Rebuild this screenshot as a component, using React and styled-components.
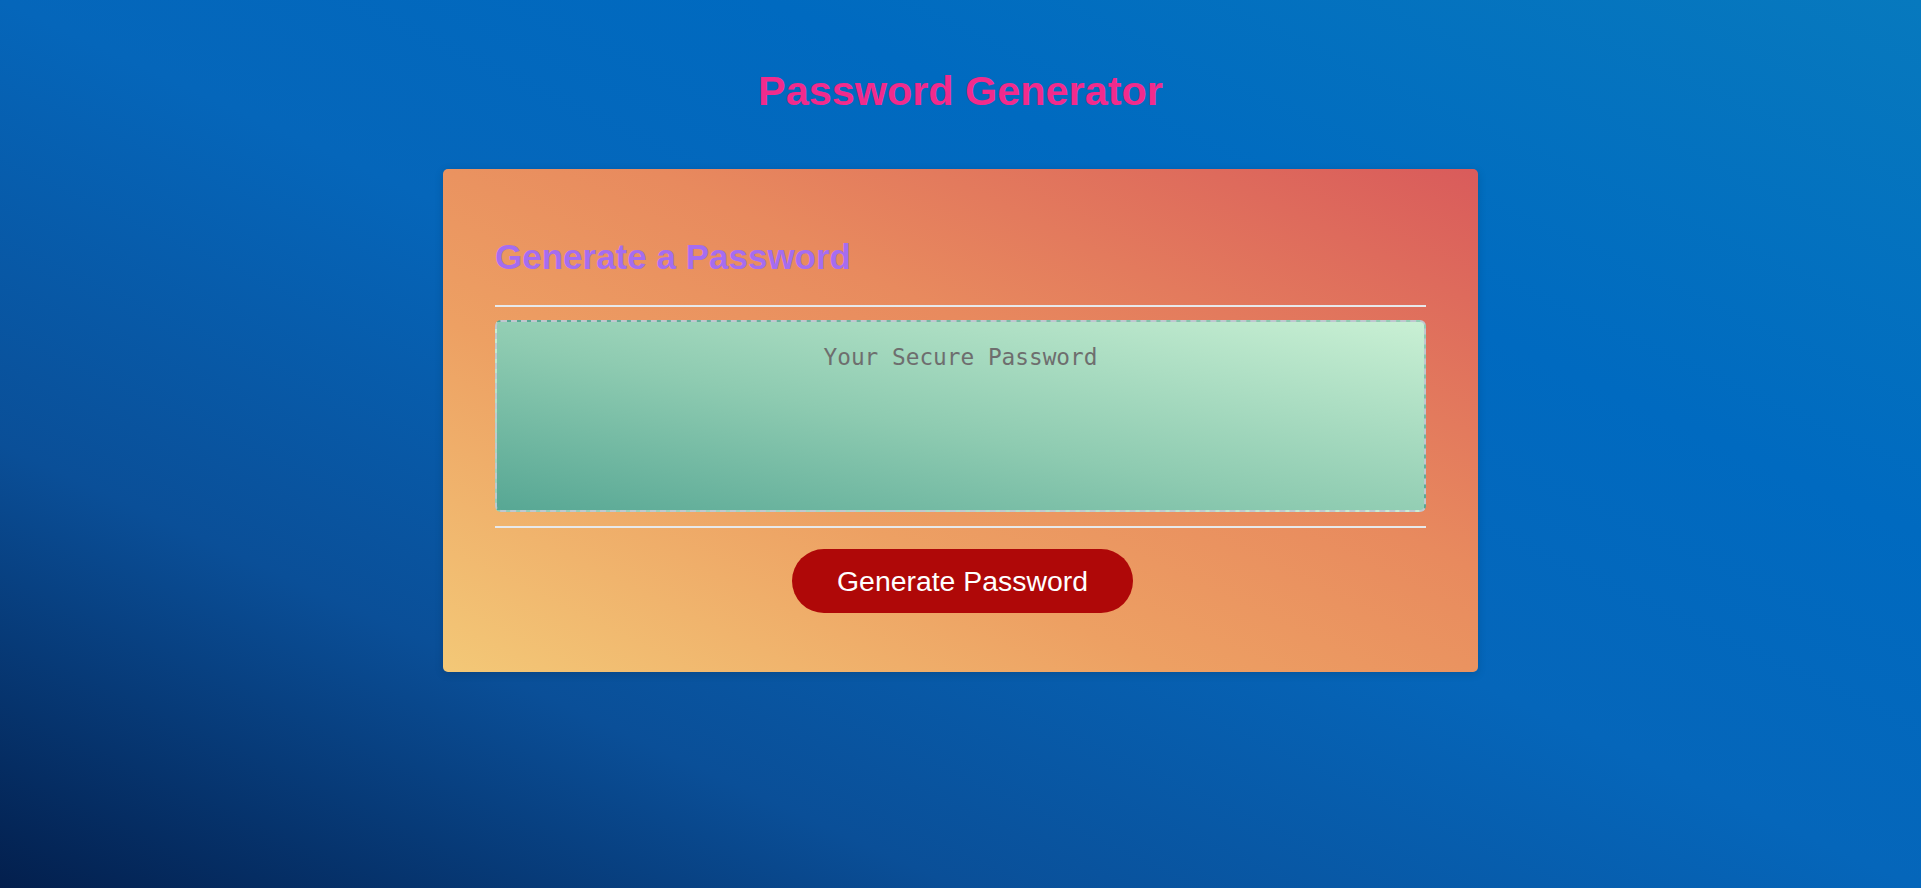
import React, { useState } from 'react';
import styled, { createGlobalStyle } from 'styled-components';

const GlobalStyle = createGlobalStyle`
  html, body {
    margin: 0;
    padding: 0;
    height: 100%;
  }
  body {
    font-family: "Liberation Sans", Arial, sans-serif;
    background: linear-gradient(to top right, #031f4d 0%, #0a4f98 25%, #0566ba 50%, #006ac0 70%, #0779be 100%);
    min-height: 888px;
  }
`;

const Page = styled.div`
  min-height: 888px;
  box-sizing: border-box;
  padding: 68px 20px 0;
`;

const Header = styled.header`
  text-align: center;
  margin-bottom: 54px;
`;

const Title = styled.h1`
  margin: 0;
  font-size: 41.4px;
  font-weight: bold;
  color: #f22b8c;
`;

const Card = styled.div`
  width: 1035px;
  box-sizing: border-box;
  margin: 0 auto;
  padding: 40px 52px 43px;
  border-radius: 5px;
  background: linear-gradient(to top right, #f3c877 0%, #eda063 35%, #e88a5e 60%, #d95b5b 100%);
  box-shadow: rgba(0, 0, 0, 0.15) 0px 2px 8px 0px;
`;

const CardHeader = styled.div`
  &::after {
    content: " ";
    display: block;
    width: 100%;
    height: 2px;
    background: #e7e9eb;
  }
`;

const CardTitle = styled.h2`
  margin: 28px 0 28px;
  font-size: 35px;
  font-weight: bold;
  color: #a56df0;
`;

const CardBody = styled.div`
  padding: 13px 0 14px;
`;

const PasswordBox = styled.textarea`
  display: block;
  width: 100%;
  height: 192px;
  box-sizing: border-box;
  padding: 22px 14px;
  border: 2px dashed #c0c7cf;
  border-radius: 6px;
  resize: none;
  overflow: hidden;
  text-align: center;
  font-family: "DejaVu Sans Mono", "Liberation Mono", monospace;
  font-size: 22.75px;
  color: #333;
  background: linear-gradient(to top right, #57a794 0%, #8ecbb1 45%, #c9f0d4 100%);
  outline: none;

  &::placeholder {
    color: #6e6e6e;
  }
`;

const CardFooter = styled.div`
  text-align: center;

  &::before {
    content: " ";
    display: block;
    width: 100%;
    height: 2px;
    background: #e7e9eb;
  }
`;

const Button = styled.button`
  display: inline-block;
  margin: 21px 16px 16px 20px;
  padding: 18px 45px;
  border: none;
  border-radius: 32px;
  background-color: hsl(360, 91%, 36%);
  color: #fff;
  font-family: "Liberation Sans", Arial, sans-serif;
  font-size: 28.4px;
  line-height: 28px;
  cursor: pointer;
`;

const chars = 'abcdefghijklmnopqrstuvwxyzABCDEFGHIJKLMNOPQRSTUVWXYZ0123456789!@#$%^&*';

export default function App() {
  const [password, setPassword] = useState('');

  function generate() {
    let out = '';
    for (let i = 0; i < 16; i++) {
      out += chars[Math.floor(Math.random() * chars.length)];
    }
    setPassword(out);
  }

  return (
    <>
      <GlobalStyle />
      <Page>
        <Header>
          <Title>Password Generator</Title>
        </Header>
        <Card>
          <CardHeader>
            <CardTitle>Generate a Password</CardTitle>
          </CardHeader>
          <CardBody>
            <PasswordBox
              readOnly
              placeholder="Your Secure Password"
              value={password}
              aria-label="Generated Password"
            />
          </CardBody>
          <CardFooter>
            <Button onClick={generate}>Generate Password</Button>
          </CardFooter>
        </Card>
      </Page>
    </>
  );
}
